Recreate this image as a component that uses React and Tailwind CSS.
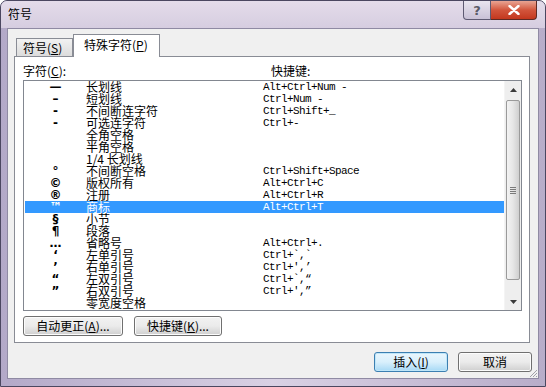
import React from 'react';

const rows = [
  { sym: '—', name: '长划线', key: 'Alt+Ctrl+Num -' },
  { sym: '–', name: '短划线', key: 'Ctrl+Num -' },
  { sym: '-', name: '不间断连字符', key: 'Ctrl+Shift+_' },
  { sym: '-', name: '可选连字符', key: 'Ctrl+-' },
  { sym: '', name: '全角空格', key: '' },
  { sym: '', name: '半角空格', key: '' },
  { sym: '', name: '1/4 长划线', key: '' },
  { sym: '°', name: '不间断空格', key: 'Ctrl+Shift+Space' },
  { sym: '©', name: '版权所有', key: 'Alt+Ctrl+C' },
  { sym: '®', name: '注册', key: 'Alt+Ctrl+R' },
  { sym: '™', name: '商标', key: 'Alt+Ctrl+T', selected: true },
  { sym: '§', name: '小节', key: '' },
  { sym: '¶', name: '段落', key: '' },
  { sym: '…', name: '省略号', key: 'Alt+Ctrl+.' },
  { sym: '‘', name: '左单引号', key: "Ctrl+`,`" },
  { sym: '’', name: '右单引号', key: "Ctrl+',’" },
  { sym: '“', name: '左双引号', key: 'Ctrl+`,“' },
  { sym: '”', name: '右双引号', key: "Ctrl+',”" },
  { sym: '', name: '零宽度空格', key: '' },
];

const cjk = { fontFamily: '"Noto Sans CJK SC", "Noto Sans", sans-serif' };
const mono = { fontFamily: '"Liberation Mono", "DejaVu Sans Mono", monospace' };

const WinButton = ({ children, width, primary }) => (
  <div
    className={`flex items-center justify-center h-[20px] rounded-[3px] border text-[12px] leading-[12px] text-black ${
      primary
        ? 'border-[#3c7fb1] bg-linear-to-b from-[#eaf6fd] via-[#d9f0fc] to-[#a7d9f5] shadow-[inset_0_0_0_1px_#bfe6f9]'
        : 'border-[#707070] bg-linear-to-b from-[#f2f2f2] via-[#ebebeb] to-[#cfcfcf] shadow-[inset_0_0_0_1px_#fcfcfc]'
    }`}
    style={{ ...cjk, width }}
  >
    {children}
  </div>
);

const Scrollbar = () => (
  <div className="w-[17px] h-full flex flex-col bg-[#eeeeee] border-l border-[#f4f4f4]">
    <div className="h-[17px] flex items-center justify-center">
      <svg width="7" height="4" viewBox="0 0 7 4"><path d="M0 4 L3.5 0 L7 4 Z" fill="#3a3a3a" /></svg>
    </div>
    <div className="mt-[2px] mx-[1px] h-[180px] rounded-[2px] border border-[#9a9a9a] bg-linear-to-r from-[#f3f3f3] via-[#e6e6e6] to-[#cfcfcf] flex items-center justify-center">
      <div className="flex flex-col gap-[1px]">
        <div className="w-[6px] h-px bg-[#7a7a7a]" />
        <div className="w-[6px] h-px bg-[#7a7a7a]" />
        <div className="w-[6px] h-px bg-[#7a7a7a]" />
        <div className="w-[6px] h-px bg-[#7a7a7a]" />
      </div>
    </div>
    <div className="flex-1" />
    <div className="h-[17px] flex items-center justify-center">
      <svg width="7" height="4" viewBox="0 0 7 4"><path d="M0 0 L3.5 4 L7 0 Z" fill="#3a3a3a" /></svg>
    </div>
  </div>
);

export default function App() {
  return (
    <div className="w-[546px] h-[387px] overflow-hidden bg-white">
      <div className="w-[546px] h-[387px] flex flex-col rounded-t-[7px] border border-[#4b4760] bg-linear-to-r from-[#b3a9c8] via-[#d9d1e4] to-[#b8adc9]">
        {/* Title bar */}
        <div className="h-[27px] flex items-start justify-between bg-linear-to-b from-[#e4dcea] to-[#d6cde0] rounded-t-[6px]">
          <div className="pl-[7px] pt-[6px] text-[12px] leading-[14px] text-black" style={cjk}>
            符号
          </div>
          <div className="flex mr-[8px]">
            <div className="w-[28px] h-[19px] rounded-bl-[4px] border border-t-0 border-[#5e5a72] bg-linear-to-b from-[#e9e5ef] to-[#c9c1d6] flex items-center justify-center text-[#5a5a66] text-[13px] font-bold leading-none" style={{ fontFamily: '"DejaVu Sans", sans-serif' }}>
              ?
            </div>
            <div className="w-[46px] h-[19px] rounded-br-[4px] border border-l-0 border-t-0 border-[#5e2a24] bg-linear-to-b from-[#e8a493] via-[#d2553c] to-[#c4371d] flex items-center justify-center">
              <svg width="12" height="10" viewBox="0 0 12 10">
                <path d="M1.5 1 L10.5 9 M10.5 1 L1.5 9" stroke="#ffffff" strokeWidth="2.4" strokeLinecap="round" />
              </svg>
            </div>
          </div>
        </div>

        {/* Client area */}
        <div className="relative mx-[6px] h-[351px] bg-[#f0f0f0] border border-[#8f8aa3] flex flex-col pl-[6px]">
          {/* Tabs */}
          <div className="flex items-end h-[27px] pt-[5px]">
            <div className="ml-[2px] w-[57px] h-[18px] border border-b-0 border-[#898c95] bg-linear-to-b from-[#f2f2f2] to-[#dcdcdc] flex items-center pl-[6px] text-[12px] leading-[12px]" style={cjk}>
              符号(<u>S</u>)
            </div>
            <div className="relative z-10 -mb-px w-[87px] h-[23px] border border-b-0 border-[#898c95] bg-white flex items-center pl-[10px] pb-[2px] text-[12px] leading-[12px]" style={cjk}>
              特殊字符(<u>P</u>)
            </div>
          </div>

          {/* Panel */}
          <div className="w-[516px] h-[287px] border border-[#898c95] bg-white pl-[8px] flex flex-col">
            <div className="h-[23px] flex pt-[8px] text-[12px] leading-[12px] text-black" style={cjk}>
              <div className="w-[248px]">字符(<u>C</u>):</div>
              <div>快捷键:</div>
            </div>

            <div className="w-[499px] h-[231px] border border-[#828790] flex">
              <div className="flex-1 flex flex-col pl-px">
                {rows.map((r, i) => (
                  <div
                    key={i}
                    className={`h-[12px] flex items-center text-[12px] leading-[12px] ${
                      r.selected ? 'bg-[#3399ff] text-white' : 'text-black'
                    }`}
                  >
                    <div className="w-[61px] text-center font-bold" style={{ fontFamily: '"DejaVu Sans", "Liberation Sans", sans-serif' }}>
                      {r.sym}
                    </div>
                    <div className="w-[177px] whitespace-nowrap" style={cjk}>
                      {r.name}
                    </div>
                    <div className="text-[11px] tracking-[-0.6px] whitespace-nowrap" style={mono}>
                      {r.key}
                    </div>
                  </div>
                ))}
              </div>
              <Scrollbar />
            </div>

            <div className="flex gap-[11px] mt-[5px]">
              <WinButton width="100px">自动更正(<u>A</u>)...</WinButton>
              <WinButton width="88px">快捷键(<u>K</u>)...</WinButton>
            </div>
          </div>

          {/* Dialog buttons */}
          <div className="flex justify-end gap-[10px] mt-[9px] pr-[6px]">
            <WinButton width="74px" primary>插入(<u>I</u>)</WinButton>
            <WinButton width="74px">取消</WinButton>
          </div>

          {/* Resize grip */}
          <svg className="absolute right-0 bottom-0" width="10" height="10" viewBox="0 0 10 10">
            <path d="M9 2 L2 9 M9 5 L5 9 M9 8 L8 9" stroke="#a0a0a8" strokeWidth="1" />
          </svg>
        </div>
      </div>
    </div>
  );
}
